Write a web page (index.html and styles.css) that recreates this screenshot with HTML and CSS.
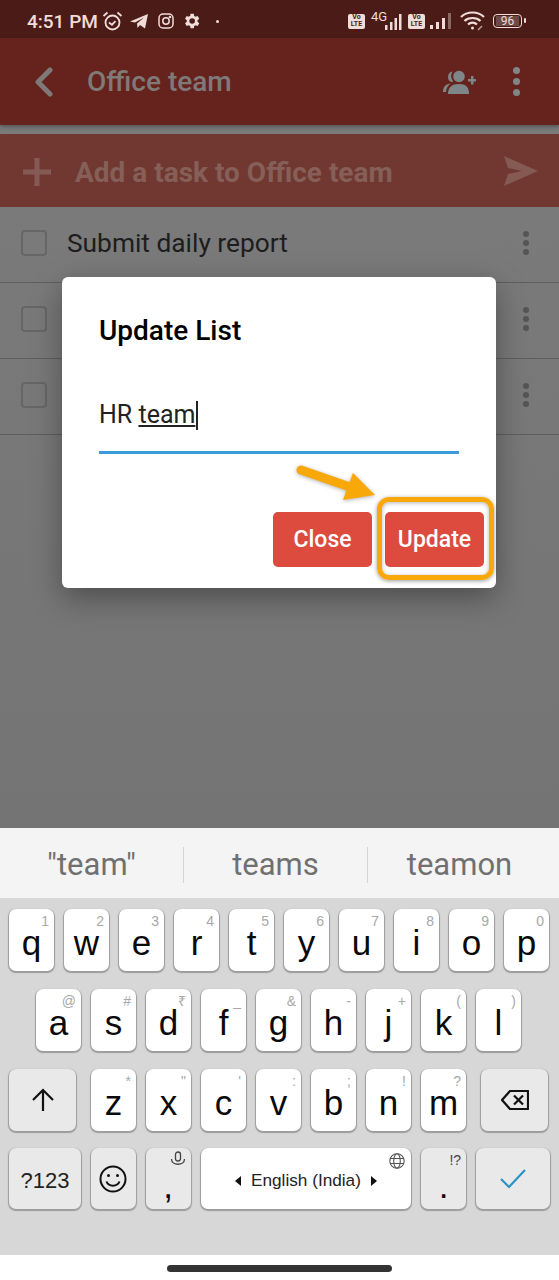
FILE: index.html
```html
<!doctype html>
<html>
<head>
	<title>Update List</title>
	<meta charset="utf-8">
	<link rel="stylesheet" href="styles.css">
</head>

<body>
	<div class="screen">
		<div class="app">
			<div class="status">
				<span class="status-time">4:51 PM</span>
				<svg class="st-alarm" width="21" height="20" viewBox="0 0 21 20" fill="none" stroke="#f0dcd8" stroke-width="1.800"><circle cx="10.500" cy="11.500" r="7"/><path d="M7 11.500l3 2.200 3.500-3.500M1.500 5l4-3.500M19.500 5l-4-3.500"/></svg>
				<svg class="st-telegram" width="18" height="15" viewBox="0 0 18 15" fill="#f0dcd8"><path d="M0 7.500L18 0l-3 14.500-5-3.500-2.500 3-.5-4.500 7-6-9 5z"/></svg>
				<svg class="st-insta" width="16" height="16" viewBox="0 0 16 16" fill="none" stroke="#f0dcd8" stroke-width="1.500"><rect x="1" y="1" width="14" height="14" rx="4"/><circle cx="8" cy="8" r="3.200"/><circle cx="12" cy="4" r=".6"/></svg>
				<svg class="st-gear" width="16" height="16" viewBox="3 2 19 20" fill="#f0dcd8"><path d="M19.400 13a7.500 7.500 0 0 0 0-2l2.200-1.700-2.100-3.600-2.600 1a7.500 7.500 0 0 0-1.700-1L14.800 3h-4.200l-.4 2.700a7.500 7.500 0 0 0-1.700 1l-2.600-1-2.100 3.600L6 11a7.500 7.500 0 0 0 0 2l-2.200 1.700 2.100 3.600 2.600-1a7.500 7.500 0 0 0 1.700 1l.4 2.700h4.200l.4-2.700a7.500 7.500 0 0 0 1.700-1l2.600 1 2.100-3.600zM12.700 15.500a3.500 3.500 0 1 1 0-7 3.500 3.500 0 0 1 0 7z"/></svg>
				<i class="st-dot"></i>
				<span class="st-right">
					<span class="volte">Vo<br>LTE</span>
					<span class="net"><em>4G</em>
						<svg width="21" height="17" viewBox="0 0 21 17" fill="#f0dcd8"><rect x="1" y="12" width="2.500" height="5"/><rect x="6" y="9" width="2.500" height="8"/><rect x="10.500" y="5" width="2.500" height="12"/><rect x="15" y="1" width="2.500" height="16"/></svg>
					</span>
					<span class="volte">Vo<br>LTE</span>
					<svg class="st-signal" width="24" height="16" viewBox="0 0 24 16" fill="#f0dcd8"><rect x="1" y="12" width="3" height="4"/><rect x="7" y="9" width="3" height="7"/><rect x="13" y="5" width="3" height="11"/><rect x="19" y="0" width="3" height="16" opacity=".4"/></svg>
					<svg class="st-wifi" width="25" height="20" viewBox="0 0 25 20" fill="none" stroke="#f0dcd8" stroke-width="2.200"><path d="M1 6c6-6 17-6 23 0M4.500 10c4-4 12-4 16 0M8 13.500c2.500-2.500 6.500-2.500 9 0"/><circle cx="12.500" cy="17" r="1.500" fill="#f0dcd8" stroke="none"/><path d="M18 19l4-4" stroke-width="1.500" opacity=".7"/></svg>
					<span class="battery"><b>96</b></span>
				</span>
			</div>

			<div class="appbar">
				<svg class="ab-back" width="20" height="30" viewBox="0 0 20 30" fill="none" stroke="#7f7a78" stroke-width="5" stroke-linecap="round" stroke-linejoin="round"><path d="M16 3L4 15l12 12"/></svg>
				<h1 class="ab-title">Office team</h1>
				<svg class="ab-people" width="33" height="24" viewBox="0 0 33 24" fill="#7f8688"><circle cx="16" cy="6.500" r="5.800"/><path d="M5 24c0-7 4-10 11-10s10 3 10 10z"/><path d="M9.500 1.500a5.500 5.500 0 0 0-1 10.500c.7 0 1.300-.2 1.800-.5a8 8 0 0 1-.8-10zM7.500 13.500C3.500 14 0 16 0 22h3c0-3.500 2-6.500 4.500-8.500z"/><path d="M25 9h3V6h2.500v3h2.500v2.500h-2.500v3H28v-3h-3z"/></svg>
				<span class="dots dots-bar"><i></i><i></i><i></i></span>
			</div>

			<div class="gap"></div>

			<div class="addbar">
				<svg class="add-plus" width="28" height="28" viewBox="0 0 28 28" fill="#855a54"><path d="M11.500 0h5v11.500H28v5H16.500V28h-5V16.500H0v-5h11.500z"/></svg>
				<span class="add-text">Add a task to Office team</span>
				<svg class="add-send" width="34" height="30" viewBox="0 0 34 30" fill="#855a52"><path d="M0 0l34 15L0 30l4-12 14-3-14-3z"/></svg>
			</div>

			<div class="row">
				<i class="check"></i>
				<span class="row-text">Submit daily report</span>
				<span class="dots"><i></i><i></i><i></i></span>
			</div>
			<div class="row">
				<i class="check"></i>
				<span class="row-text"></span>
				<span class="dots"><i></i><i></i><i></i></span>
			</div>
			<div class="row">
				<i class="check"></i>
				<span class="row-text"></span>
				<span class="dots"><i></i><i></i><i></i></span>
			</div>

			<div class="dialog">
				<h2 class="dialog-title">Update List</h2>
				<div class="field">HR <u>team</u><i class="caret"></i></div>
				<div class="dialog-op">
					<a class="btn" href="#">Close</a>
					<a class="btn" href="#">Update</a>
				</div>
			</div>

			<svg class="callout" width="100" height="50" viewBox="0 0 100 50" fill="#f9a80a"><path d="M11 6L60 23" stroke="#f9a80a" stroke-width="9" stroke-linecap="round" fill="none"/><path d="M63 9l22 22-32 5z"/></svg>
			<div class="ring"></div>
		</div>

		<div class="suggest">
			<span>"team"</span>
			<span>teams</span>
			<span>teamon</span>
		</div>

		<div class="kb">
			<div class="kb-row">
				<div class="key">q<sup>1</sup></div>
				<div class="key">w<sup>2</sup></div>
				<div class="key">e<sup>3</sup></div>
				<div class="key">r<sup>4</sup></div>
				<div class="key">t<sup>5</sup></div>
				<div class="key">y<sup>6</sup></div>
				<div class="key">u<sup>7</sup></div>
				<div class="key">i<sup>8</sup></div>
				<div class="key">o<sup>9</sup></div>
				<div class="key">p<sup>0</sup></div>
			</div>
			<div class="kb-row kb-row-mid">
				<div class="key">a<sup>@</sup></div>
				<div class="key">s<sup>#</sup></div>
				<div class="key">d<sup>₹</sup></div>
				<div class="key">f<sup>_</sup></div>
				<div class="key">g<sup>&amp;</sup></div>
				<div class="key">h<sup>-</sup></div>
				<div class="key">j<sup>+</sup></div>
				<div class="key">k<sup>(</sup></div>
				<div class="key">l<sup>)</sup></div>
			</div>
			<div class="kb-row">
				<div class="key key-fn key-shift">
					<svg width="24" height="24" viewBox="0 0 24 24" fill="none" stroke="#111" stroke-width="2.200"><path d="M12 23V2M2 12L12 2l10 10"/></svg>
				</div>
				<div class="key">z<sup>*</sup></div>
				<div class="key">x<sup>"</sup></div>
				<div class="key">c<sup>'</sup></div>
				<div class="key">v<sup>:</sup></div>
				<div class="key">b<sup>;</sup></div>
				<div class="key">n<sup>!</sup></div>
				<div class="key">m<sup>?</sup></div>
				<div class="key key-fn key-back">
					<svg width="28" height="20" viewBox="0 0 28 20" fill="none" stroke="#111" stroke-width="2.200" stroke-linejoin="round"><path d="M9 1h18v18H9L1 10z"/><path d="M13 5.500l9 9M22 5.500l-9 9"/></svg>
				</div>
			</div>
			<div class="kb-row kb-row-last">
				<div class="key key-fn key-num">?123</div>
				<div class="key key-fn key-emoji">
					<svg width="28" height="28" viewBox="0 0 28 28" fill="none" stroke="#111" stroke-width="2"><circle cx="14" cy="14" r="12.500"/><path d="M7.500 16.500c2 5.500 11 5.500 13 0"/><circle cx="9.500" cy="10.500" r="1.500" fill="#111" stroke="none"/><circle cx="18.500" cy="10.500" r="1.500" fill="#111" stroke="none"/></svg>
				</div>
				<div class="key key-fn key-comma">,
					<svg class="key-mic" width="16" height="16" viewBox="0 0 16 16" fill="none" stroke="#444" stroke-width="1.300"><rect x="5.500" y="1" width="5" height="9" rx="2.500"/><path d="M1.500 8c0 7 13 7 13 0"/></svg>
				</div>
				<div class="key key-space">
					<i class="tri tri-l"></i>
					<span>English (India)</span>
					<i class="tri tri-r"></i>
					<svg class="key-globe" width="16" height="16" viewBox="0 0 16 16" fill="none" stroke="#555" stroke-width="1.100"><circle cx="8" cy="8" r="7.200"/><ellipse cx="8" cy="8" rx="3.300" ry="7.200"/><path d="M1 5.500h14M1 10.500h14"/></svg>
				</div>
				<div class="key key-fn key-dot">.<sup>!?</sup></div>
				<div class="key key-fn key-enter">
					<svg width="26" height="20" viewBox="0 0 26 20" fill="none" stroke="#2a93c5" stroke-width="2.200"><path d="M1 10l8 8L25 1"/></svg>
				</div>
			</div>
		</div>

		<div class="nav"><i></i></div>
	</div>
</body>
</html>
```

FILE: styles.css
```css
body, h1, h2 {
	padding: 0;
	margin: 0;
}
body {
	font-family: Roboto, sans-serif;
	background: #fff;
}
i {
	display: block;
}
.screen {
	display: flex;
	flex-direction: column;
	width: 559px;
	height: 1280px;
	overflow: hidden;
}

/* dimmed app behind the dialog */
.app {
	position: relative;
	height: 828px;
	background: linear-gradient(#7c7c7c, #747474);
}
.status {
	display: flex;
	align-items: center;
	height: 38px;
	padding: 4px 0 0 27px;
	box-sizing: border-box;
	background: #4a1b17;
	color: #f0dcd8;
}
.status-time {
	width: 75px;
	font-size: 19px;
	font-weight: 500;
}
.st-telegram {
	margin-left: 7px;
}
.st-insta {
	margin-left: 10px;
}
.st-gear {
	margin-left: 10px;
}
.st-dot {
	width: 3px;
	height: 3px;
	margin-left: 16px;
	border-radius: 50%;
	background: #f0dcd8;
}
.st-right {
	display: flex;
	align-items: center;
	margin-left: 129px;
}
.volte {
	width: 17px;
	height: 15px;
	border-radius: 2px;
	background: #f0dcd8;
	color: #4a1b17;
	font-size: 7px;
	font-weight: 700;
	line-height: 7.500px;
	text-align: center;
}
.net {
	position: relative;
	display: flex;
	align-items: flex-end;
	justify-content: flex-end;
	width: 37px;
	height: 17px;
	margin-left: 6px;
	padding-right: 3px;
	box-sizing: border-box;
}
.net em {
	position: absolute;
	left: 0;
	top: -3px;
	font-style: normal;
	font-size: 13px;
	line-height: 13px;
}
.st-signal {
	margin-left: 4px;
}
.st-wifi {
	margin-left: 7px;
}
.battery {
	position: relative;
	display: flex;
	align-items: center;
	justify-content: center;
	width: 27px;
	height: 12px;
	margin-left: 8px;
	border: 1.500px solid #f0dcd8;
	border-radius: 4px;
}
.battery::after {
	content: '';
	position: absolute;
	right: -5px;
	top: 3px;
	width: 2px;
	height: 5px;
	border-radius: 1px;
	background: #f0dcd8;
}
.battery b {
	display: block;
	width: 23px;
	height: 10px;
	background: #6d4a46;
	font-size: 12px;
	font-weight: 400;
	line-height: 10px;
	text-align: center;
}

.appbar {
	display: flex;
	align-items: center;
	height: 87px;
	background: #66221c;
	box-shadow: 0 2px 4px rgba(0,0,0,.3);
}
.ab-back {
	margin-left: 34px;
}
.ab-title {
	flex: 1;
	margin-left: 33px;
	font-size: 28px;
	font-weight: 500;
	color: #7f7a78;
}
.ab-people {
	margin-right: 37px;
}

.gap {
	height: 9px;
}
.addbar {
	display: flex;
	align-items: center;
	height: 73px;
	background: #703830;
}
.add-plus {
	margin: 3px 0 0 23px;
}
.add-text {
	flex: 1;
	margin-left: 24px;
	padding-top: 3px;
	font-size: 28px;
	font-weight: 700;
	color: #855f58;
}
.add-send {
	margin-right: 21px;
}

.row {
	display: flex;
	align-items: center;
	height: 76px;
	padding-bottom: 3px;
	box-sizing: border-box;
	border-bottom: 1px solid #5e5e5e;
}
.check {
	width: 22px;
	height: 22px;
	margin-left: 21px;
	border: 2px solid #666;
	border-radius: 4px;
}
.row-text {
	flex: 1;
	margin-left: 20px;
	font-size: 26.300px;
	color: #1d1d1d;
}
.dots {
	display: flex;
	flex-direction: column;
	gap: 3px;
	margin-right: 30px;
}
.dots i {
	width: 6px;
	height: 6px;
	border-radius: 50%;
	background: #555;
}
.dots-bar {
	gap: 4px;
	margin-right: 39px;
}
.dots-bar i {
	width: 7px;
	height: 7px;
	background: #7f8688;
}

/* dialog sits over the list */
.dialog {
	position: absolute;
	left: 62px;
	top: 277px;
	width: 434px;
	height: 311px;
	box-sizing: border-box;
	padding: 37px 37px 0;
	background: #fff;
	border-radius: 6px;
	box-shadow: 0 10px 30px rgba(0,0,0,.35);
}
.dialog-title {
	font-size: 28px;
	font-weight: 500;
	line-height: 34px;
	color: #000;
}
.field {
	position: relative;
	height: 56px;
	margin-top: 47px;
	font-size: 25px;
	line-height: 40px;
	color: #222;
	border-bottom: 3px solid #3a9bdc;
}
.caret {
	position: absolute;
	left: 97px;
	top: 6px;
	width: 2px;
	height: 29px;
	background: #222;
}
.dialog-op {
	display: flex;
	justify-content: flex-end;
	gap: 13px;
	margin: 58px -25px 0 0;
}
.btn {
	width: 99px;
	height: 55px;
	border-radius: 5px;
	background: #dc4b3e;
	color: #fff;
	font-size: 23px;
	font-weight: 500;
	line-height: 55px;
	text-align: center;
	text-decoration: none;
}
.callout {
	position: absolute;
	left: 290px;
	top: 464px;
	filter: drop-shadow(0 1px 2px rgba(0,0,0,.3));
}
.ring {
	position: absolute;
	left: 377px;
	top: 497px;
	width: 117px;
	height: 83px;
	box-sizing: border-box;
	border: 5px solid #f9a80a;
	border-radius: 12px;
	box-shadow: 0 1px 4px rgba(0,0,0,.4), inset 0 1px 4px rgba(0,0,0,.3);
}

.suggest {
	display: flex;
	align-items: center;
	height: 70px;
	padding-top: 4px;
	box-sizing: border-box;
	background: #f4f4f4;
	font-size: 31px;
	color: #707070;
}
.suggest span {
	width: 183px;
	line-height: 36px;
	text-align: center;
	border-left: 1px solid #d4d4d4;
}
.suggest span:first-child {
	border-left: 0;
}
.suggest span:last-child {
	flex: 1;
	padding-right: 8px;
}

/* keyboard */
.kb {
	display: flex;
	flex-direction: column;
	gap: 18px;
	height: 357px;
	box-sizing: border-box;
	padding: 11px 9px 0;
	background: #d7d7d7;
	font-family: "Liberation Sans", sans-serif;
}
.kb-row {
	display: flex;
	gap: 10px;
	height: 62px;
}
.kb-row-mid {
	padding-left: 27px;
}
.kb-row-last {
	height: 61px;
	margin-top: -1px;
}
.key {
	position: relative;
	display: flex;
	align-items: center;
	justify-content: center;
	width: 45px;
	height: 100%;
	padding-top: 6px;
	box-sizing: border-box;
	background: #fff;
	border-radius: 7px;
	box-shadow: 0 1px 1px 1px #9c9c9c;
	font-size: 35px;
	color: #0a0a0a;
}
.key sup {
	position: absolute;
	right: 5px;
	top: 4px;
	font-size: 14px;
	line-height: 16px;
	color: #a8a8a8;
}
.key-fn {
	background: #e9e9e9;
}
.key-shift {
	width: 67px;
	padding-top: 0;
	margin-right: 5px;
}
.key-back {
	width: 67px;
	padding-top: 0;
	margin-left: 5px;
}
.key-num {
	width: 72px;
	padding-top: 4px;
	font-size: 22px;
	color: #222;
}
.key-emoji {
	padding-top: 0;
}
.key-comma {
	padding-top: 14px;
}
.key-mic {
	position: absolute;
	right: 5px;
	top: 3px;
}
.key-space {
	width: 211px;
	gap: 10px;
	padding-top: 4px;
	font-size: 17.200px;
	color: #222;
}
.key-globe {
	position: absolute;
	right: 6px;
	top: 5px;
}
.tri {
	width: 0;
	height: 0;
	border-top: 5px solid transparent;
	border-bottom: 5px solid transparent;
}
.tri-l {
	border-right: 6px solid #111;
}
.tri-r {
	border-left: 6px solid #111;
}
.key-dot {
	padding-top: 14px;
}
.key-dot sup {
	color: #444;
}
.key-enter {
	width: 74px;
	padding-top: 0;
}

.nav {
	display: flex;
	align-items: center;
	justify-content: center;
	flex: 1;
	background: #fff;
}
.nav i {
	width: 225px;
	height: 7px;
	margin-top: 1px;
	border-radius: 4px;
	background: #333;
}
```
